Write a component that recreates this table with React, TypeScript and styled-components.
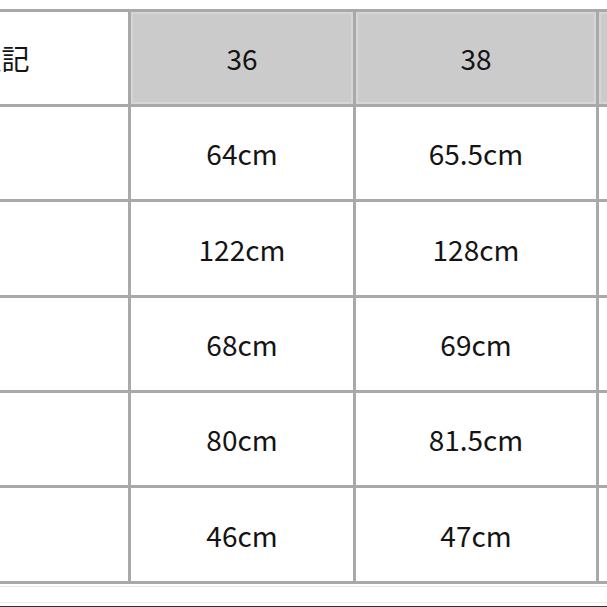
import { Fragment } from "react";
import styled, { createGlobalStyle } from "styled-components";

const GlobalStyle = createGlobalStyle`
  html, body {
    margin: 0;
    padding: 0;
    background: #fff;
    overflow: hidden;
  }
  body {
    font-family: "Noto Sans CJK JP", "Noto Sans", sans-serif;
    color: #141414;
  }
`;

type Row = { label: string; values: string[] };

const sizes = ["36", "38", ""];

const rows: Row[] = [
  { label: "", values: ["64cm", "65.5cm", ""] },
  { label: "", values: ["122cm", "128cm", ""] },
  { label: "", values: ["68cm", "69cm", ""] },
  { label: "", values: ["80cm", "81.5cm", ""] },
  { label: "", values: ["46cm", "47cm", ""] },
];

const rowHeights = [92, 92, 93, 92, 92, 93];

export default function App() {
  return (
    <Page>
      <GlobalStyle />
      <Viewport>
        <Grid>
          <Cell>サイズ表記</Cell>
          {sizes.map((s, i) => (
            <Cell key={`h${i}`} $head>
              {s}
            </Cell>
          ))}
          {rows.map((r, ri) => (
            <Fragment key={ri}>
              <Cell>{r.label}</Cell>
              {r.values.map((v, vi) => (
                <Cell key={vi}>{v}</Cell>
              ))}
            </Fragment>
          ))}
        </Grid>
      </Viewport>
      <Footer>
        <FooterBar />
      </Footer>
    </Page>
  );
}

const Page = styled.div`
  width: 607px;
  height: 607px;
  overflow: hidden;
`;

const Viewport = styled.div`
  padding-top: 9px;
  overflow: hidden;
`;

const Grid = styled.div`
  display: grid;
  grid-template-columns: 336px 222px 240px 200px;
  grid-template-rows: ${rowHeights.map((h) => `${h}px`).join(" ")};
  gap: 3px;
  padding: 3px;
  margin-left: -211px;
  width: max-content;
  background: #a9a9a9;
`;

const Cell = styled.div<{ $head?: boolean }>`
  display: flex;
  align-items: center;
  justify-content: center;
  box-sizing: border-box;
  font-size: 28px;
  white-space: nowrap;
  background: ${(p) => (p.$head ? "#cbcbcb" : "#fff")};
  box-shadow: ${(p) => (p.$head ? "inset 0 0 0 2px #d6d6d6" : "none")};
`;

const Footer = styled.div`
  margin-top: 2px;
  height: 15px;
  border-top: 1px solid #e6e6e6;
  border-bottom: 1px solid #eeeeee;
  position: relative;
`;

const FooterBar = styled.div`
  position: absolute;
  left: 0;
  right: 0;
  top: 19px;
  height: 4px;
  background: #333;
`;
